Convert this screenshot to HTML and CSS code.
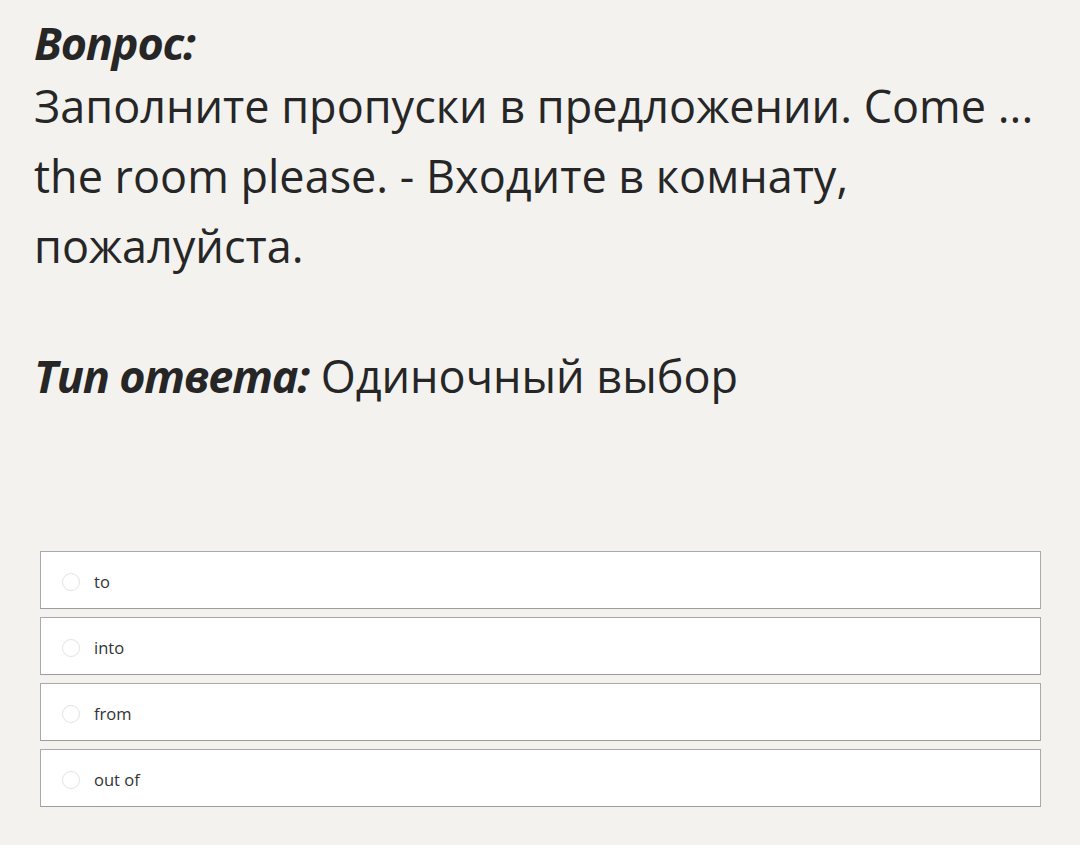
FILE: index.html
```html
<!DOCTYPE html>
<html lang="ru">
<head>
<meta charset="utf-8">
<link rel="stylesheet" href="styles.css">
</head>
<body>
<main class="page">
  <section class="question">
    <div class="label">Вопрос:</div>
    <p class="text">Заполните пропуски в предложении. Come ... the room please. - Входите в комнату, пожалуйста.</p>
    <p class="type"><span class="label">Тип ответа:</span> Одиночный выбор</p>
  </section>
  <ul class="options">
    <li class="option"><span class="radio"></span><span class="opt-text">to</span></li>
    <li class="option"><span class="radio"></span><span class="opt-text">into</span></li>
    <li class="option"><span class="radio"></span><span class="opt-text">from</span></li>
    <li class="option"><span class="radio"></span><span class="opt-text">out of</span></li>
  </ul>
</main>
</body>
</html>
```

FILE: styles.css
```css
html, body {
  margin: 0;
  padding: 0;
  background: #f3f2ef;
}
body {
  font-family: "Open Sans", "Noto Sans", sans-serif;
  color: #262626;
}
.page {
  padding: 15px 39px 0 34px;
}
.question {
  font-size: 45px;
  line-height: 70px;
}
.label {
  font-weight: 700;
  font-style: italic;
  letter-spacing: -1.2px;
}
.question > .label {
  line-height: 56px;
}
.text {
  margin: 0;
}
.type {
  margin: 60px 0 0 0;
}
.options {
  list-style: none;
  margin: 140px 0 0 6px;
  padding: 0;
  display: flex;
  flex-direction: column;
  gap: 8px;
}
.option {
  height: 56px;
  box-sizing: content-box;
  background: #ffffff;
  border: 1px solid #a9a9a9;
  border-bottom-color: #9c9c9c;
  display: flex;
  align-items: center;
  padding: 3px 0 0 21px;
  height: 53px;
}
.radio {
  width: 18px;
  height: 18px;
  border-radius: 50%;
  border: 1px solid #e4e4e4;
  box-shadow: 0 0 1px rgba(0,0,0,0.05);
  box-sizing: border-box;
  margin-right: 14px;
}
.opt-text {
  font-size: 16.5px;
  color: #333;
}
```
